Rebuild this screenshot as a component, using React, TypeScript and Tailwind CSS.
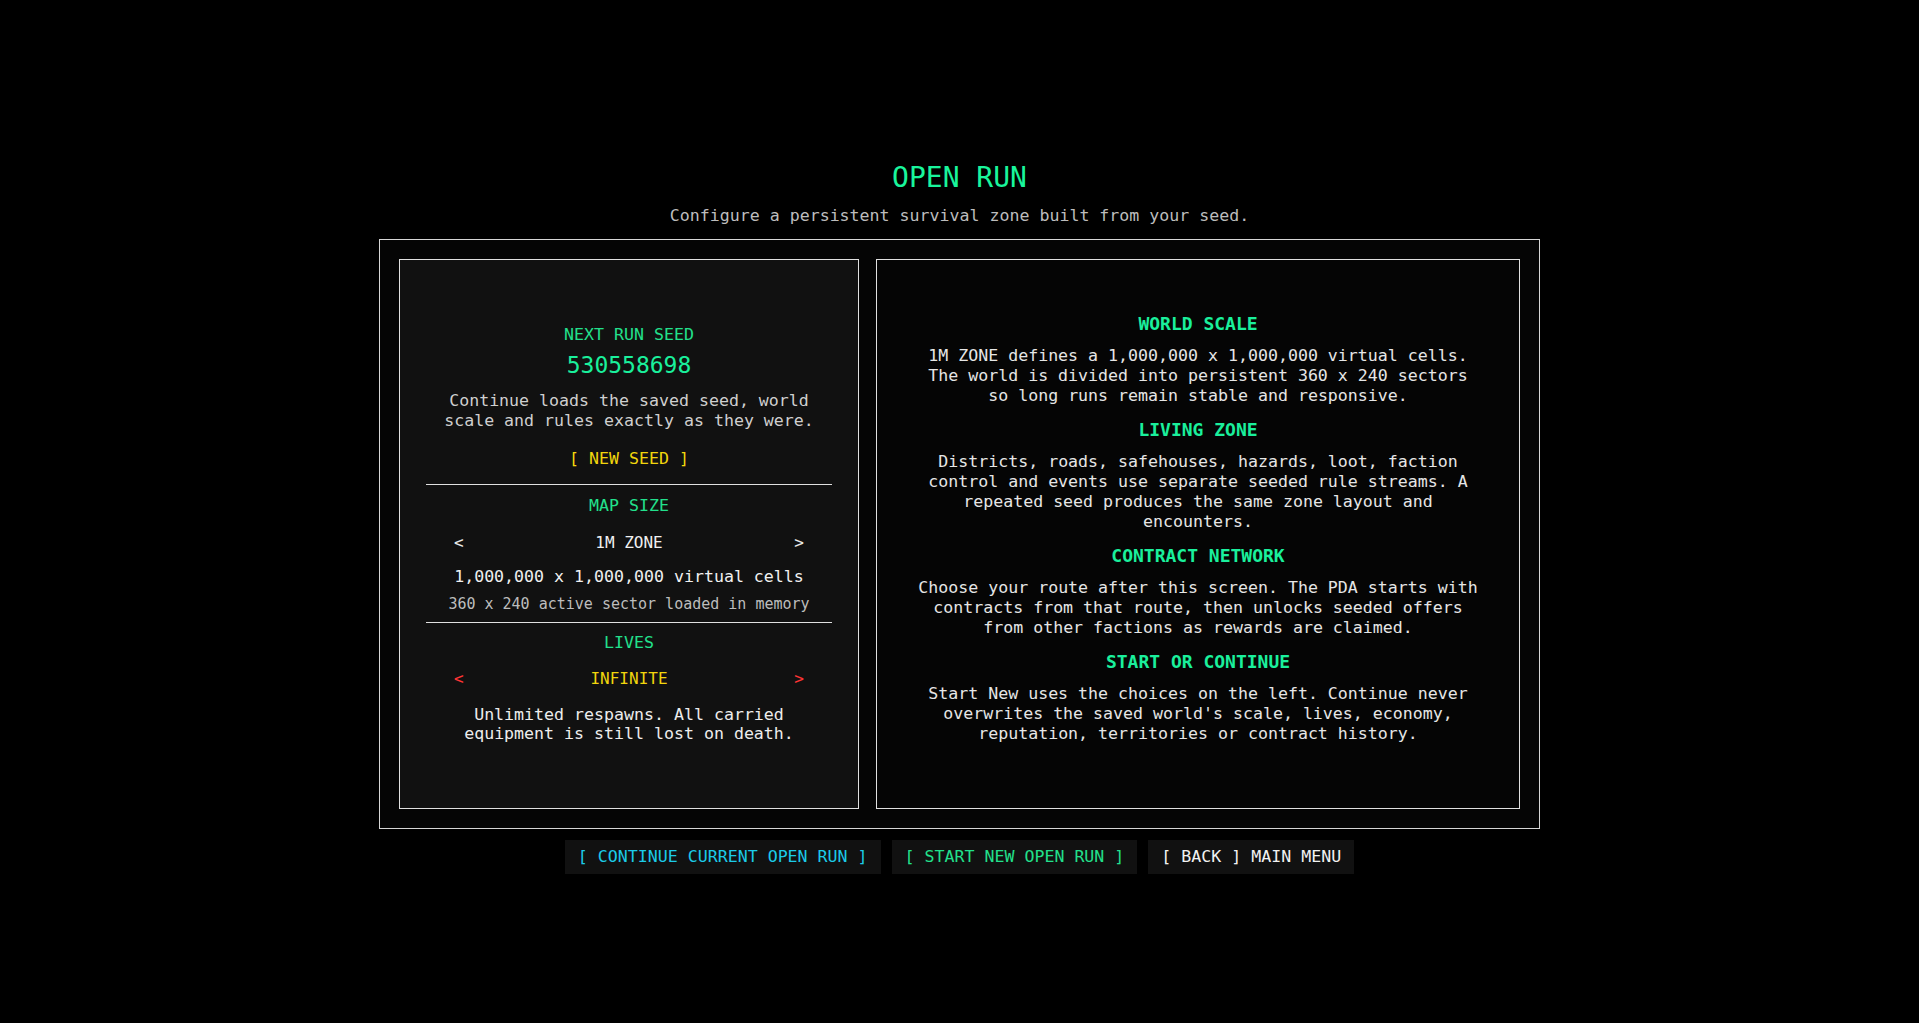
const mono = { fontFamily: '"DejaVu Sans Mono", "Liberation Mono", monospace' };

function Section({ title, children }: { title: string; children: React.ReactNode }) {
    return (
        <div className="flex flex-col items-center">
            <h3 className="text-[18px] font-bold text-[#1af09c] leading-[22px]">{title}</h3>
            <p className="mt-[11px] text-[16.6px] leading-[20px] text-[#e6e6e6] max-w-[562px]">{children}</p>
        </div>
    );
}

function Picker({ value, arrowClass, valueClass }: { value: string; arrowClass: string; valueClass: string }) {
    return (
        <div className="flex items-center justify-between w-full px-[28px] text-[16px] leading-[20px]">
            <span className={arrowClass}>&lt;</span>
            <span className={valueClass}>{value}</span>
            <span className={arrowClass}>&gt;</span>
        </div>
    );
}

export default function App() {
    return (
        <div className="min-h-screen bg-black flex flex-col items-center pt-[161px] text-center" style={mono}>
            <h1 className="text-[28px] leading-[34px] text-[#19f59c]">OPEN RUN</h1>
            <p className="mt-[11px] text-[16.6px] leading-[20px] text-[#bdbdbd]">
                Configure a persistent survival zone built from your seed.
            </p>

            <div className="mt-[13px] w-[1161px] h-[590px] border border-[#d6d6d6] bg-[#050505] p-[19px] grid grid-cols-[460px_644px] gap-[17px]">
                {/* left: settings */}
                <div className="border border-[#e0e0e0] bg-[#111111] flex flex-col items-center justify-center px-[26px]">
                    <div className="text-[16.6px] leading-[20px] text-[#22e08c]">NEXT RUN SEED</div>
                    <div className="mt-[6px] text-[23px] leading-[28px] text-[#1af09c]">530558698</div>
                    <p className="mt-[12px] text-[16.6px] leading-[20px] text-[#cfcfcf]">
                        Continue loads the saved seed, world scale and rules exactly as they were.
                    </p>
                    <button className="mt-[18px] text-[16.6px] leading-[20px] text-[#f2d60c]">[ NEW SEED ]</button>

                    <div className="mt-[15px] w-full h-px bg-[#e0e0e0]" />

                    <div className="mt-[11px] text-[16.6px] leading-[20px] text-[#22e08c]">MAP SIZE</div>
                    <div className="mt-[17px] w-full">
                        <Picker value="1M ZONE" arrowClass="text-[#e8e8e8]" valueClass="text-[#f0f0f0]" />
                    </div>
                    <div className="mt-[14px] text-[16.6px] leading-[20px] text-[#f0f0f0]">
                        1,000,000 x 1,000,000 virtual cells
                    </div>
                    <div className="mt-[7px] text-[15px] leading-[20px] text-[#bdbdbd]">
                        360 x 240 active sector loaded in memory
                    </div>

                    <div className="mt-[8px] w-full h-px bg-[#e0e0e0]" />

                    <div className="mt-[10px] text-[16.6px] leading-[20px] text-[#22e08c]">LIVES</div>
                    <div className="mt-[16px] w-full">
                        <Picker value="INFINITE" arrowClass="text-[#ff3434]" valueClass="text-[#f2d60c]" />
                    </div>
                    <p className="mt-[16px] text-[16.6px] leading-[19px] text-[#ededed]">
                        Unlimited respawns. All carried equipment is still lost on death.
                    </p>
                </div>

                {/* right: info */}
                <div className="border border-[#e0e0e0] bg-[#050505] flex flex-col items-center justify-center gap-[13px] pb-[12px]">
                    <Section title="WORLD SCALE">
                        1M ZONE defines a 1,000,000 x 1,000,000 virtual cells. The world is divided into
                        persistent 360 x 240 sectors so long runs remain stable and responsive.
                    </Section>
                    <Section title="LIVING ZONE">
                        Districts, roads, safehouses, hazards, loot, faction control and events use separate
                        seeded rule streams. A repeated seed produces the same zone layout and encounters.
                    </Section>
                    <Section title="CONTRACT NETWORK">
                        Choose your route after this screen. The PDA starts with contracts from that route,
                        then unlocks seeded offers from other factions as rewards are claimed.
                    </Section>
                    <Section title="START OR CONTINUE">
                        Start New uses the choices on the left. Continue never overwrites the saved world's
                        scale, lives, economy, reputation, territories or contract history.
                    </Section>
                </div>
            </div>

            <div className="mt-[11px] flex gap-[11px] text-[16.6px]">
                <button className="h-[34px] px-[13px] bg-[#111111] text-[#1ccbe8]">[ CONTINUE CURRENT OPEN RUN ]</button>
                <button className="h-[34px] px-[13px] bg-[#111111] text-[#22e08c]">[ START NEW OPEN RUN ]</button>
                <button className="h-[34px] px-[13px] bg-[#111111] text-[#f2f2f2]">[ BACK ] MAIN MENU</button>
            </div>
        </div>
    );
}
